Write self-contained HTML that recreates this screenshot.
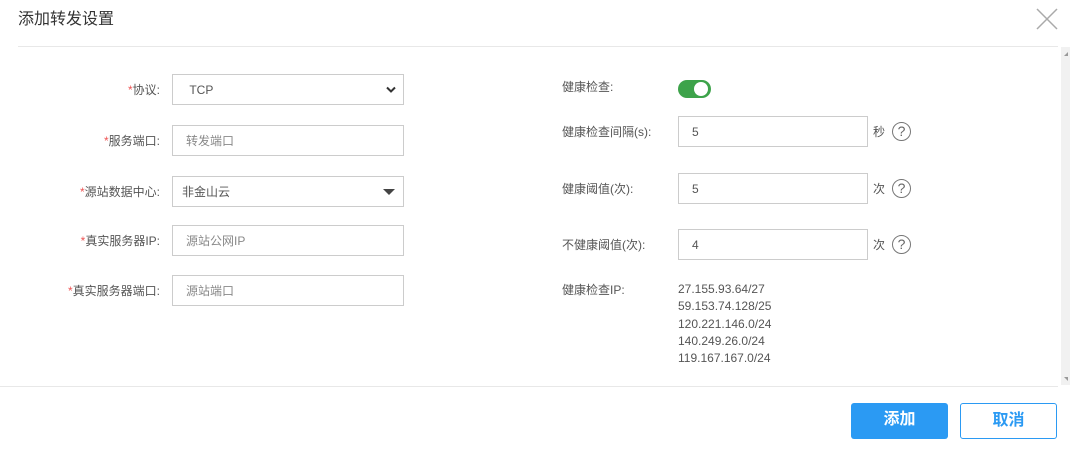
<!DOCTYPE html>
<html><head><meta charset="utf-8"><style>
*{margin:0;padding:0;box-sizing:border-box}
body{width:1070px;height:451px;background:#fff;position:relative;overflow:hidden;font-family:"Liberation Sans","Noto Sans CJK SC",sans-serif;color:#555;font-size:12px}
.a{position:absolute}
.title{left:18px;top:10px;font-size:16px;color:#333;line-height:20px}
.hl{left:18px;top:46px;width:1040px;height:1px;background:#e8e8e8}
.fl{left:0;top:386px;width:1058px;height:1px;background:#e8e8e8}
.sb{left:1061px;top:47px;width:9px;height:338px;background:#f1f1f1}
.lbl{width:160px;text-align:right;line-height:16px}
.lbl b{color:#e55;font-weight:normal}
.in{border:1px solid #ccc;height:31px;line-height:31px;padding-left:13px;color:#555;font-size:12px}
.ph{color:#888}
.rl{line-height:16px}
.q{width:19px;height:19px;border:1.5px solid #777;border-radius:50%;text-align:center;line-height:16px;font-size:14px;color:#666}
.btn{height:36px;width:97px;border-radius:3px;text-align:center;line-height:34px;font-size:16px;font-weight:bold}
</style></head><body>
<div class="a title">添加转发设置</div>
<svg class="a" style="left:1036px;top:8px" width="22" height="22"><path d="M1 1L21 21M21 1L1 21" stroke="#aaa" stroke-width="1.5"/></svg>
<div class="a hl"></div>
<div class="a sb"></div>
<svg class="a" style="left:1062px;top:50px" width="8" height="8"><path d="M2 6L6 2V6Z" fill="#999"/></svg>
<svg class="a" style="left:1062px;top:375px" width="8" height="8"><path d="M2 2H6L6 6Z" fill="#999"/></svg>

<div class="a lbl" style="left:0;top:82px"><b>*</b>协议:</div>
<div class="a in" style="left:172px;top:74px;width:232px">&nbsp;TCP</div>
<svg class="a" style="left:386px;top:86px" width="10" height="8"><path d="M1 1.5L5 5.5L9 1.5" stroke="#333" stroke-width="2" fill="none"/></svg>

<div class="a lbl" style="left:0;top:133px"><b>*</b>服务端口:</div>
<div class="a in ph" style="left:172px;top:125px;width:232px">转发端口</div>

<div class="a lbl" style="left:0;top:184px"><b>*</b>源站数据中心:</div>
<div class="a in" style="left:172px;top:176px;width:232px;padding-left:9px">非金山云</div>
<svg class="a" style="left:383px;top:189px" width="12" height="7"><path d="M0 0H12L6 6Z" fill="#444"/></svg>

<div class="a lbl" style="left:0;top:233px"><b>*</b>真实服务器IP:</div>
<div class="a in ph" style="left:172px;top:225px;width:232px">源站公网IP</div>

<div class="a lbl" style="left:0;top:283px"><b>*</b>真实服务器端口:</div>
<div class="a in ph" style="left:172px;top:275px;width:232px">源站端口</div>

<div class="a rl" style="left:562px;top:79px">健康检查:</div>
<div class="a" style="left:678px;top:80px;width:33px;height:18px;border-radius:9px;background:#3da34a"></div>
<div class="a" style="left:694px;top:82px;width:14px;height:14px;border-radius:50%;background:#fff"></div>

<div class="a rl" style="left:562px;top:124px">健康检查间隔(s):</div>
<div class="a in" style="left:678px;top:116px;width:190px">5</div>
<div class="a" style="left:873px;top:124px;line-height:16px">秒</div>
<div class="a q" style="left:892px;top:122px">?</div>

<div class="a rl" style="left:562px;top:181px">健康阈值(次):</div>
<div class="a in" style="left:678px;top:173px;width:190px">5</div>
<div class="a" style="left:873px;top:181px;line-height:16px">次</div>
<div class="a q" style="left:892px;top:179px">?</div>

<div class="a rl" style="left:562px;top:237px">不健康阈值(次):</div>
<div class="a in" style="left:678px;top:229px;width:190px">4</div>
<div class="a" style="left:873px;top:237px;line-height:16px">次</div>
<div class="a q" style="left:892px;top:235px">?</div>

<div class="a rl" style="left:562px;top:282px">健康检查IP:</div>
<div class="a" style="left:678px;top:281px;line-height:17.3px">27.155.93.64/27<br>59.153.74.128/25<br>120.221.146.0/24<br>140.249.26.0/24<br>119.167.167.0/24</div>

<div class="a fl"></div>
<div class="a btn" style="left:851px;top:403px;background:#2b9af3;color:#fff">添加</div>
<div class="a btn" style="left:960px;top:403px;border:1px solid #2b9af3;color:#2b9af3;background:#fff">取消</div>
</body></html>
